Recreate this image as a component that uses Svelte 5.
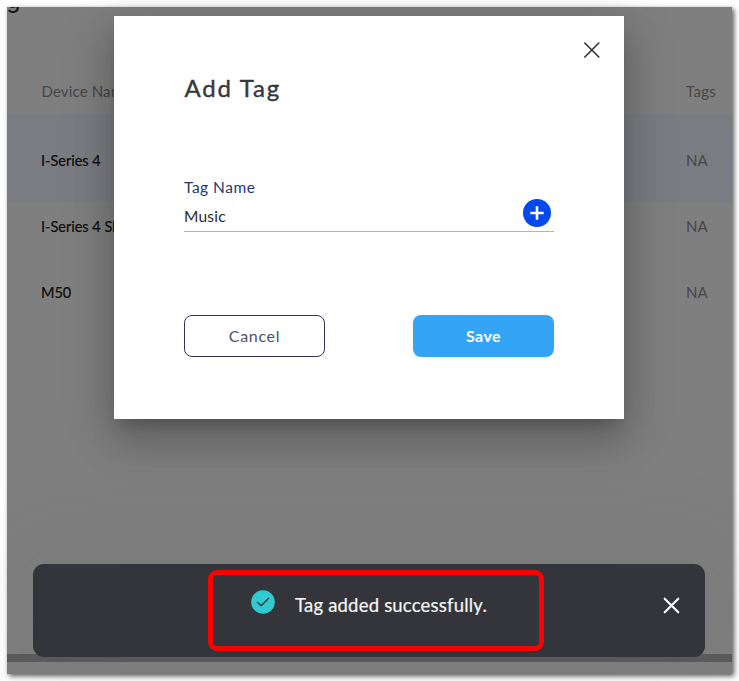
<script>
  const rows = [
    { name: 'I-Series 4', tag: 'NA', selected: true },
    { name: 'I-Series 4 Shared', tag: 'NA', selected: false },
    { name: 'M50', tag: 'NA', selected: false }
  ];
  let tagName = $state('Music');
</script>

<main>
  <div class="frame">
    <section class="page">
      <div class="heading">g</div>
      <div class="head"><span class="device">Device Name</span><span class="tags">Tags</span></div>
      {#each rows as row}
        <div class="row" class:selected={row.selected}>
          <span class="name">{row.name}</span><span class="na">{row.tag}</span>
        </div>
      {/each}
    </section>
    <div class="scrollbar"></div>

    <section class="dialog">
      <button class="close" aria-label="Close">
        <svg width="16" height="16" viewBox="0 0 16 16"><path d="M.8 1 14.8 15M14.8 1 .8 15" fill="none" stroke="#303038" stroke-width="1.6" stroke-linecap="round" /></svg>
      </button>
      <h1>Add Tag</h1>
      <label for="tag">Tag Name</label>
      <div class="field">
        <input id="tag" bind:value={tagName} />
        <button class="add" aria-label="Add">
          <svg width="28" height="28" viewBox="0 0 28 28"><circle cx="14" cy="14" r="14" fill="#0548f0" /><path d="M14 7.3v13.4M7.3 14h13.4" stroke="#fff" stroke-width="2.6" /></svg>
        </button>
      </div>
      <div class="actions">
        <button class="cancel">Cancel</button>
        <button class="save">Save</button>
      </div>
    </section>

    <div class="toast">
      <svg class="check" width="24" height="24" viewBox="0 0 24 24"><circle cx="12" cy="12" r="11.8" fill="#30cbd0" /><path d="m6.4 12.2 3.8 3.6L17.7 8.2" fill="none" stroke="#34353b" stroke-width="1.3" stroke-linecap="round" stroke-linejoin="round" /></svg>
      <span class="message">Tag added successfully.</span>
      <button class="dismiss" aria-label="Dismiss">
        <svg width="17" height="17" viewBox="0 0 17 17"><path d="M1.7 1.7 15.3 15.3M15.3 1.7 1.7 15.3" fill="none" stroke="#fff" stroke-width="2.1" stroke-linecap="round" /></svg>
      </button>
    </div>
    <div class="highlight"></div>
  </div>
</main>

<style>
  :global(body) { margin: 0; background: #fff; }
  main {
    width: 739px;
    height: 681px;
    padding: 7px;
    box-sizing: border-box;
    overflow: hidden;
    font-family: Lato, 'Liberation Sans', sans-serif;
  }
  .frame {
    position: relative;
    width: 725px;
    height: 667px;
    background: #7f7f7f;
    box-shadow: 2px 2px 5px rgba(0, 0, 0, 0.65);
  }
  .page { height: 647px; overflow: hidden; }
  .heading {
    height: 64px;
    margin-left: -1px;
    font-family: Roboto, sans-serif;
    font-size: 26px;
    line-height: 24px;
    color: #17171b;
    box-sizing: border-box;
    margin-top: -20px;
  }
  .head, .row { display: flex; padding-left: 34px; white-space: nowrap; font-size: 15px; }
  .head { height: 63px; box-sizing: border-box; padding-top: 30px; line-height: 20px; color: #464646; }
  .device, .name { width: 645px; flex: none; }
  .device { letter-spacing: 0.15px; text-indent: 0.5px; }
  .tags { letter-spacing: 0.3px; }
  .row { height: 66px; box-sizing: border-box; padding-top: 15px; line-height: 20px; }
  .selected { height: 88px; padding-top: 37px; background: #7b7c81; }
  .name { color: #0b0b0c; font-size: 14.5px; -webkit-text-stroke: 0.2px #0b0b0c; }
  .na { color: #464648; margin-top: -1px; }
  .scrollbar { height: 8px; background: #5a5b5c; }
  button { padding: 0; border: 0; background: none; font: inherit; display: block; }
  svg { display: block; }
  .dialog {
    position: absolute;
    left: 107px;
    top: 9px;
    width: 510px;
    height: 403px;
    padding: 26px 70px 0;
    box-sizing: border-box;
    background: #fff;
    box-shadow: 0 11px 15px -7px rgba(0, 0, 0, 0.2), 0 24px 38px 3px rgba(0, 0, 0, 0.14), 0 9px 46px 8px rgba(0, 0, 0, 0.12);
  }
  .close { margin: 0 -46px 0 auto; }
  h1 { margin: 15px 0 0; font-size: 24px; line-height: 30px; font-weight: 400; letter-spacing: 1.75px; text-indent: 0.5px; color: #37383e; -webkit-text-stroke: 0.4px #37383e; }
  label { display: block; margin-top: 74px; font-size: 15.5px; line-height: 20px; letter-spacing: 0.5px; color: #26386f; }
  .field { display: flex; height: 35px; box-sizing: border-box; border-bottom: 1px solid #b3b3b3; }
  input { flex: 1; min-width: 0; height: 20px; margin-top: 9px; padding: 0; border: 0; outline: 0; font: 15.5px/20px Lato, sans-serif; letter-spacing: 0.2px; color: #29292c; background: none; }
  .add { margin: 2px 3px 0 0; align-self: flex-start; }
  .actions { display: flex; justify-content: space-between; margin-top: 83px; }
  .actions button { width: 141px; height: 42px; padding-bottom: 2px; border-radius: 8px; font-size: 16px; }
  .actions .cancel { border: 1px solid #343258; color: #50506a; letter-spacing: 0.7px; }
  .actions .save { background: #34a4f4; color: #fff; font-weight: 700; letter-spacing: 0.4px; }
  .toast {
    position: absolute;
    left: 26px;
    top: 557px;
    width: 672px;
    height: 93px;
    padding: 0 25px 0 218px;
    box-sizing: border-box;
    display: flex;
    border-radius: 11px;
    background: #34353b;
    box-shadow: 0 0 90px 20px rgba(75, 80, 100, 0.09);
  }
  .check { margin-top: 26px; flex: none; }
  .message { margin: 29px auto 0 20px; font-size: 18.5px; line-height: 24px; color: #f5f5f5; white-space: nowrap; letter-spacing: 0.2px; -webkit-text-stroke: 0.2px #f5f5f5; }
  .dismiss { margin-top: 33px; align-self: flex-start; }
  .highlight {
    position: absolute;
    left: 201px;
    top: 563px;
    width: 336px;
    height: 81px;
    box-sizing: border-box;
    border: 5px solid #f00;
    border-radius: 9px;
  }
</style>
